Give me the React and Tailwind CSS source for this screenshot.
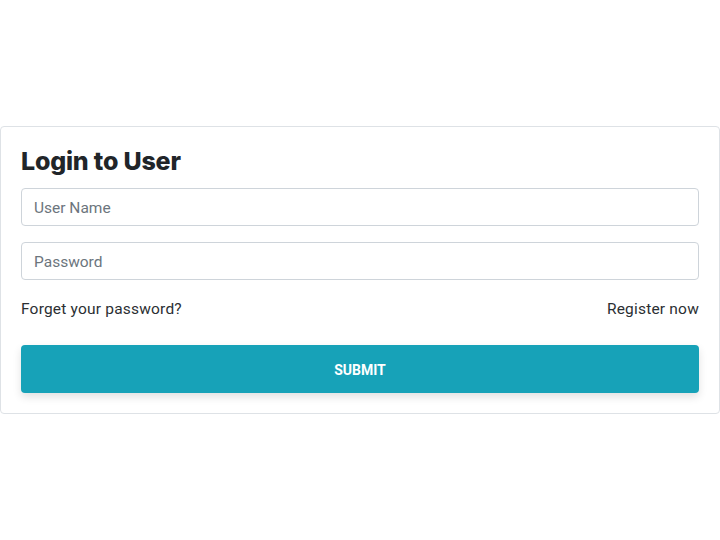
export default function App() {
  return (
    <div
      className="min-h-screen bg-white flex items-center"
      style={{ fontFamily: "Roboto, 'Liberation Sans', sans-serif" }}
    >
      <form className="w-full border border-[#dee2e6] rounded bg-white p-5 text-[#212529]">
        <h2 className="text-[25px] leading-[29px] font-extrabold mb-3 font-['Inter',sans-serif] tracking-[-0.2px]">
          Login to User
        </h2>
        <input
          type="text"
          placeholder="User Name"
          className="block w-full h-[38px] px-3 pt-[2px] mb-4 border border-[#ced4da] rounded text-[15.5px] placeholder:text-[#6c757d] focus:outline-none"
        />
        <input
          type="password"
          placeholder="Password"
          className="block w-full h-[38px] px-3 pt-[2px] mb-4 border border-[#ced4da] rounded text-[15.5px] placeholder:text-[#6c757d] focus:outline-none"
        />
        <div className="flex justify-between pt-px h-6 text-[15.5px] leading-6 tracking-[0.2px] text-[#2b2f33]">
          <a className="cursor-pointer">Forget your password?</a>
          <a className="cursor-pointer">Register now</a>
        </div>
        <button
          type="button"
          className="mt-[25px] w-full h-12 pt-[3px] rounded bg-[#17a2b8] text-white text-[14px] font-bold shadow-[0_4px_8px_rgba(0,0,0,0.12)]"
        >
          SUBMIT
        </button>
      </form>
    </div>
  );
}
